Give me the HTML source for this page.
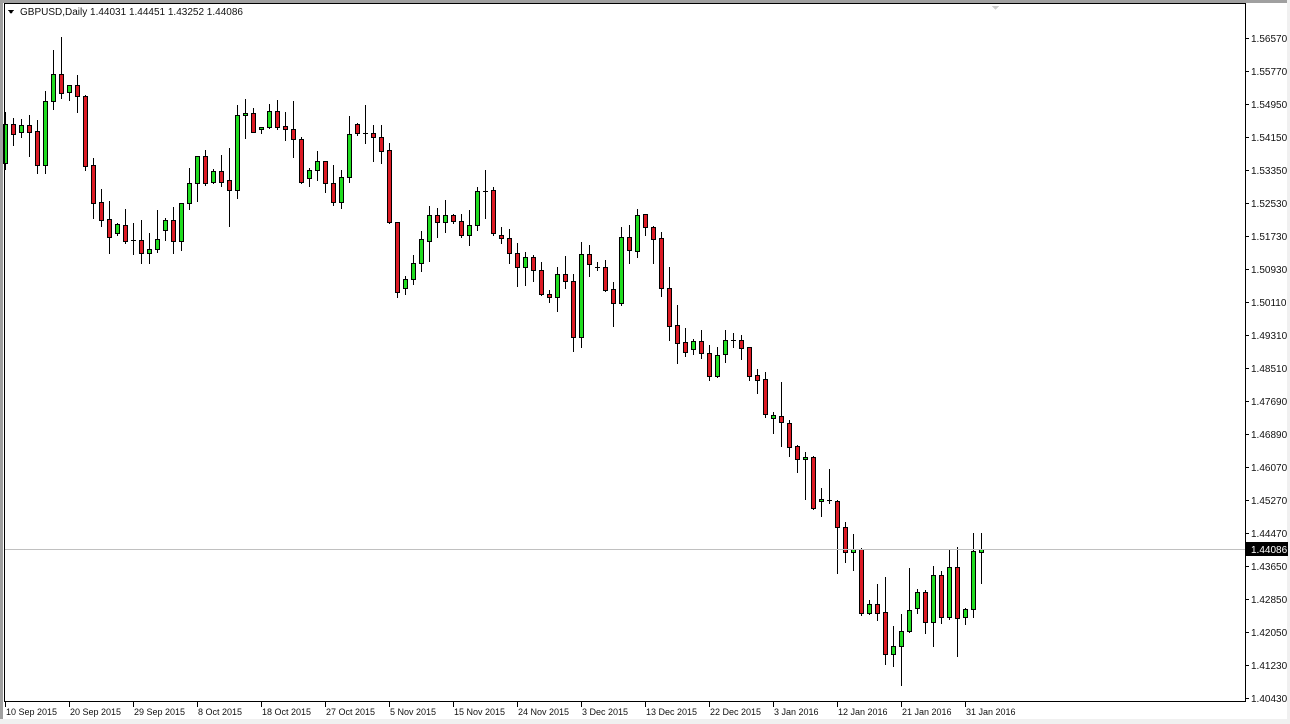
<!DOCTYPE html>
<html><head><meta charset="utf-8">
<style>
html,body{margin:0;padding:0;background:#fff;width:1290px;height:724px;overflow:hidden}
svg{display:block}
text{font-family:"Liberation Sans",sans-serif;font-size:10px;fill:#111}
text.dt{font-size:9px}
</style></head>
<body>
<svg id="s" width="1290" height="724" xmlns="http://www.w3.org/2000/svg" shape-rendering="crispEdges">
<rect x="0" y="0" width="1290" height="724" fill="#fff"/>
<rect x="0" y="0" width="1290" height="3" fill="#a0a0a0"/>
<rect x="0" y="0" width="3" height="724" fill="#a0a0a0"/>
<rect x="0" y="719" width="1290" height="5" fill="#f0f0f0"/>
<rect x="1287" y="0" width="3" height="724" fill="#f0f0f0"/>
<g id="c"></g>
<line x1="4" y1="549.5" x2="1245" y2="549.5" stroke="#c0c0c0"/>
<rect x="4.5" y="3.5" width="1241" height="698" fill="none" stroke="#000"/>
<polygon points="8,10 14,10 11,14" fill="#000"/>
<text x="20" y="15">GBPUSD,Daily  1.44031 1.44451 1.43252 1.44086</text>
<polygon points="992,6 999,6 995.5,10" fill="#ccc"/>
<g id="ax"></g>
<rect x="1246" y="542" width="42" height="14" fill="#000"/>
<text x="1251" y="553" style="fill:#fff">1.44086</text>
</svg>
<script>
var d=[[124,163,112,169,'g'],[124,134,118,145,'r'],[125,132,119,137,'g'],[125,132,115,156,'r'],[131,165,120,173,'r'],[101,165,91,173,'g'],[74,101,50,109,'g'],[74,93,37,98,'r'],[85,92,85,100,'g'],[85,96,75,112,'r'],
[96,166,95,170,'r'],[165,203,158,218,'r'],[202,220,189,226,'r'],[219,237,201,253,'r'],[224,233,223,235,'g'],[225,241,209,243,'r'],[240,240,223,254,'d'],[240,253,220,263,'r'],[249,253,233,263,'g'],[239,249,210,252,'g'],
[220,230,218,240,'g'],[220,241,207,253,'r'],[203,241,203,250,'g'],[183,203,168,209,'g'],[156,183,156,201,'g'],[156,183,150,185,'r'],[171,182,169,183,'g'],[171,182,155,186,'r'],[180,190,148,226,'r'],[115,190,105,198,'g'],
[113,115,99,138,'g'],[113,132,108,132,'r'],[127,129,127,133,'g'],[111,127,104,128,'g'],[111,127,100,129,'r'],[126,129,112,140,'r'],[129,139,101,157,'r'],[139,182,137,183,'r'],[170,178,168,186,'g'],[161,170,151,180,'g'],
[161,183,161,192,'r'],[183,202,165,205,'r'],[177,202,170,208,'g'],[134,177,116,182,'g'],[124,133,123,135,'r'],[133,133,105,143,'d'],[133,137,125,161,'r'],[137,151,125,163,'r'],[150,222,143,223,'r'],[222,292,222,297,'r'],
[279,288,276,294,'g'],[263,279,255,284,'g'],[239,263,231,271,'g'],[215,241,206,261,'g'],[215,222,208,237,'r'],[215,222,200,232,'g'],[215,221,214,223,'r'],[221,235,214,237,'r'],[225,235,210,245,'g'],[191,225,187,230,'g'],
[191,191,170,218,'d'],[190,233,187,235,'r'],[235,238,227,243,'r'],[238,253,229,263,'r'],[253,267,243,286,'r'],[257,267,252,285,'g'],[257,270,255,281,'r'],[270,294,262,295,'r'],[294,297,290,302,'r'],[274,297,267,311,'g'],
[274,281,256,288,'r'],[281,337,274,351,'r'],[254,337,242,347,'g'],[254,264,245,276,'r'],[267,267,262,270,'d'],[267,290,260,291,'r'],[289,303,282,326,'r'],[237,303,227,305,'g'],[237,250,225,263,'r'],[215,251,209,257,'g'],
[214,227,214,235,'r'],[227,239,226,263,'r'],[238,288,232,296,'r'],[288,326,267,340,'r'],[325,343,305,363,'r'],[342,352,328,356,'r'],[341,349,339,354,'g'],[341,353,330,358,'r'],[353,376,345,380,'r'],[355,376,347,377,'g'],
[340,354,330,362,'g'],[340,340,333,347,'d'],[340,348,335,359,'r'],[347,376,347,380,'r'],[375,380,369,393,'r'],[379,414,372,417,'r'],[415,418,412,433,'g'],[416,422,382,446,'r'],[423,447,420,456,'r'],[446,459,445,472,'r'],
[457,459,452,499,'g'],[457,508,456,509,'r'],[499,501,488,516,'g'],[500,500,469,503,'d'],[501,527,500,573,'r'],[527,552,522,562,'r'],[549,552,534,570,'g'],[549,613,548,615,'r'],[604,613,600,614,'g'],[604,613,584,620,'r'],
[612,654,577,664,'r'],[646,654,626,666,'g'],[631,646,614,685,'g'],[610,631,568,632,'g'],[592,608,589,613,'g'],[592,622,590,633,'r'],[575,622,566,646,'g'],[575,617,571,623,'r'],[567,617,549,619,'g'],[567,618,547,656,'r'],
[609,617,608,624,'g'],[551,609,533,617,'g'],[549,552,533,583,'g']];
var h='';
for(var i=0;i<d.length;i++){var c=d[i],cx=5+8*i,x=cx+0.5;
h+='<line x1="'+x+'" y1="'+c[2]+'" x2="'+x+'" y2="'+(c[3]+1)+'" stroke="#000"/>';
if(c[4]=='d'||c[1]-c[0]<1){h+='<line x1="'+(cx-2)+'" y1="'+(c[0]+0.5)+'" x2="'+(cx+3)+'" y2="'+(c[0]+0.5)+'" stroke="#000"/>';}
else{h+='<rect x="'+(cx-1.5)+'" y="'+(c[0]+0.5)+'" width="4" height="'+(c[1]-c[0])+'" fill="'+(c[4]=='g'?'#20dc20':'#dc1a24')+'" stroke="#000"/>';}}
document.getElementById('c').innerHTML=h;
var a='',p=['1.56570','1.55770','1.54950','1.54150','1.53350','1.52530','1.51730','1.50930','1.50110','1.49310','1.48510','1.47690','1.46890','1.46070','1.45270','1.44470','1.43650','1.42850','1.42050','1.41230','1.40430'];
for(var j=0;j<p.length;j++){var y=38+33*j;a+='<line x1="1245" y1="'+(y+0.5)+'" x2="1249" y2="'+(y+0.5)+'" stroke="#000"/><text x="1251" y="'+(y+4)+'">'+p[j]+'</text>';}
var ds=['10 Sep 2015','20 Sep 2015','29 Sep 2015','8 Oct 2015','18 Oct 2015','27 Oct 2015','5 Nov 2015','15 Nov 2015','24 Nov 2015','3 Dec 2015','13 Dec 2015','22 Dec 2015','3 Jan 2016','12 Jan 2016','21 Jan 2016','31 Jan 2016'];
for(var k=0;k<ds.length;k++){var tx=5+64*k;a+='<line x1="'+(tx+0.5)+'" y1="702" x2="'+(tx+0.5)+'" y2="707" stroke="#000"/><text class="dt" x="'+(tx+1)+'" y="715">'+ds[k]+'</text>';}
document.getElementById('ax').innerHTML=a;
</script>
</body></html>
